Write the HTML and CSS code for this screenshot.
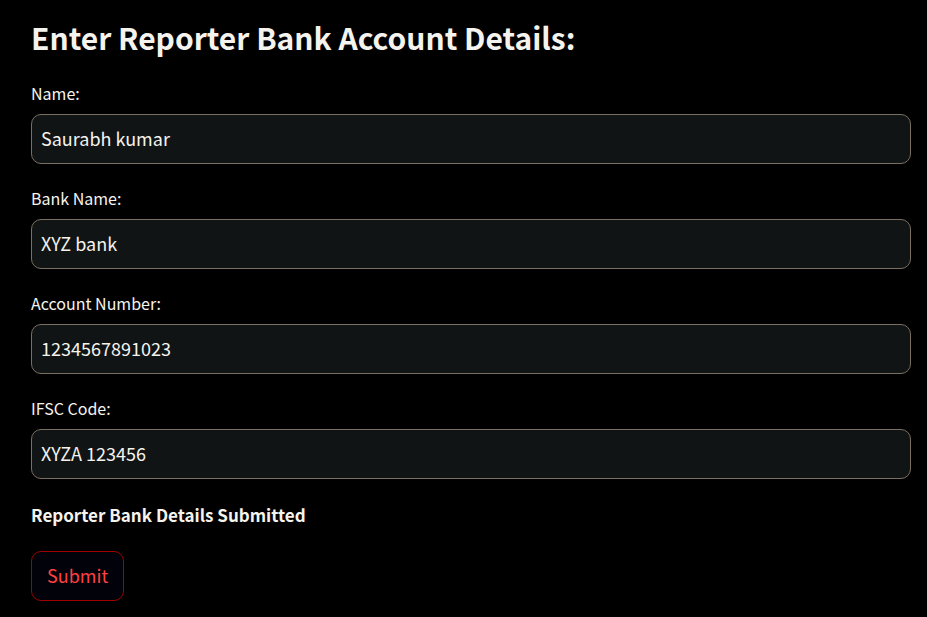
FILE: index.html
```html
<!DOCTYPE html>
<html lang="en">
<head>
<meta charset="utf-8">
<title>Reporter Bank Account Details</title>
<link rel="stylesheet" href="styles.css">
</head>
<body>
<form class="form">
  <h1 class="title">Enter Reporter Bank Account Details:</h1>
  <div class="field">
    <label class="label" for="name">Name:</label>
    <input class="input" id="name" type="text" value="Saurabh kumar">
  </div>
  <div class="field">
    <label class="label" for="bank">Bank Name:</label>
    <input class="input" id="bank" type="text" value="XYZ bank">
  </div>
  <div class="field">
    <label class="label" for="account">Account Number:</label>
    <input class="input" id="account" type="text" value="1234567891023">
  </div>
  <div class="field">
    <label class="label" for="ifsc">IFSC Code:</label>
    <input class="input" id="ifsc" type="text" value="XYZA 123456">
  </div>
  <p class="status">Reporter Bank Details Submitted</p>
  <button class="submit" type="button">Submit</button>
</form>
</body>
</html>
```
FILE: styles.css
```css
* {
  box-sizing: border-box;
}

body {
  margin: 0;
  background: #000;
  color: #f5f3ee;
  font-family: "Source Sans Pro", "Noto Sans CJK SC", "Open Sans", sans-serif;
}

.form {
  display: flex;
  flex-direction: column;
  align-items: stretch;
  padding: 14px 16px 16px 31px;
}

.title {
  margin: 0 0 21px;
  font-size: 30px;
  line-height: 46px;
  font-weight: 700;
}

.field {
  display: flex;
  flex-direction: column;
  gap: 9px;
  margin-bottom: 22px;
}

.label {
  font-size: 16px;
  line-height: 24px;
}

.input {
  width: 100%;
  height: 50px;
  padding: 0 9px 2px;
  border: 1px solid #7a6f60;
  border-radius: 10px;
  background: #111414;
  color: inherit;
  font: inherit;
  font-size: 18px;
}

.status {
  margin: 0 0 22px;
  font-size: 17px;
  line-height: 28px;
  font-weight: 700;
}

.submit {
  align-self: flex-start;
  height: 50px;
  padding: 0 15px 2px;
  border: 1px solid #a00000;
  border-radius: 10px;
  background: #02020a;
  color: #ff4040;
  font: inherit;
  font-size: 18px;
}
```
